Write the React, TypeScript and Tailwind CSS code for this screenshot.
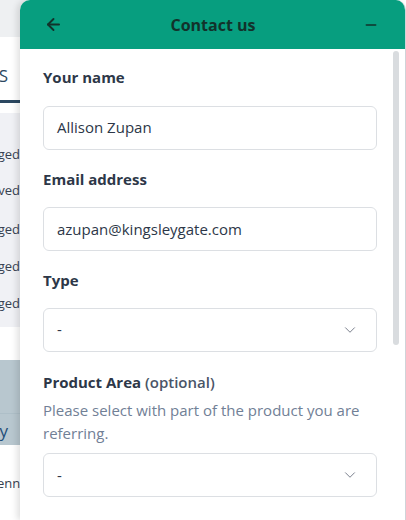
import { ArrowLeft, ChevronDown, Minus } from "lucide-react";

const font = { fontFamily: '"Open Sans", "Noto Sans", sans-serif' };

function Field({ value, select }: { value: string; select?: boolean }) {
  return (
    <div className="flex h-[44px] items-center justify-between rounded-md border border-[#dcdfe3] bg-white pl-[13px] pr-[17px] text-[15px] text-[#2d3748]">
      <span>{value}</span>
      {select && <ChevronDown className="h-[18px] w-[18px] text-[#6b7280]" strokeWidth={1.2} />}
    </div>
  );
}

export default function App() {
  return (
    <div className="relative h-[520px] w-[406px] overflow-hidden bg-white" style={font}>
      {/* page behind the widget */}
      <div className="flex w-[60px] flex-col overflow-hidden text-[13px] text-[#374151]">
        <div className="h-[37px] bg-[#eef0f2]" />
        <div className="flex h-[66px] items-end justify-end border-b-[3px] border-[#2c4861] bg-white pb-[12px] text-[17px] text-[#2c4861]">
          <span className="pr-[52px]">NOTES</span>
        </div>
        <div className="h-[10px] bg-white" />
        <div className="flex h-[214px] flex-col items-end bg-[#f0f1f5] pr-[40px] pt-[32px] whitespace-nowrap">
          <span className="h-[36px]">Changed</span>
          <span className="h-[39px]">Approved</span>
          <span className="h-[37px]">Changed</span>
          <span className="h-[37px]">Changed</span>
          <span>Changed</span>
        </div>
        <div className="h-[33px] bg-white" />
        <div className="flex h-[53px] bg-[#b8c7cf]" />
        <div className="flex h-[32px] items-end justify-end border-t border-[#aebfc8] bg-[#b8c7cf] pb-[2px] pr-[52px] text-[17px] text-[#1f4e79]">
          <span>Priority</span>
        </div>
        <div className="flex h-[75px] items-center justify-end pr-[18px] pt-[2px] whitespace-nowrap">
          <span>Kennedy</span>
        </div>
      </div>

      {/* contact widget */}
      <div className="absolute left-[20px] top-0 flex h-[520px] w-[386px] flex-col overflow-hidden rounded-t-[10px] border-r border-[#cfd3d8] bg-white shadow-[-3px_0_6px_rgba(0,0,0,0.12)]">
        <div className="flex h-[49px] shrink-0 items-center justify-between bg-[#079e7f] pl-[24px] pr-[26px] text-[#12322b]">
          <ArrowLeft className="h-[19px] w-[19px]" strokeWidth={2.4} />
          <span className="text-[16px] font-bold">Contact us</span>
          <Minus className="h-[16px] w-[16px]" strokeWidth={2.4} />
        </div>
        <div className="flex flex-1">
          <div className="flex flex-1 flex-col pl-[23px] pr-[14px] pt-[17px]">
            <label className="mb-[17px] text-[15px] font-bold text-[#2d3748]">Your name</label>
            <Field value="Allison Zupan" />
            <label className="mb-[17px] mt-[18px] text-[15px] font-bold text-[#2d3748]">Email address</label>
            <Field value="azupan@kingsleygate.com" />
            <label className="mb-[16px] mt-[18px] text-[15px] font-bold text-[#2d3748]">Type</label>
            <Field value="-" select />
            <label className="mt-[19px] text-[15px] font-bold text-[#2d3748]">
              Product Area <span className="font-semibold text-[#4a5568]">(optional)</span>
            </label>
            <p className="mb-[8px] mt-[6px] text-[15px] leading-[23px] text-[#718096]">
              Please select with part of the product you are referring.
            </p>
            <Field value="-" select />
          </div>
          <div className="w-[14px] shrink-0 pt-[2px]">
            <div className="ml-[2px] h-[294px] w-[6px] rounded-full bg-[#d9dcdf]" />
          </div>
        </div>
      </div>
    </div>
  );
}
